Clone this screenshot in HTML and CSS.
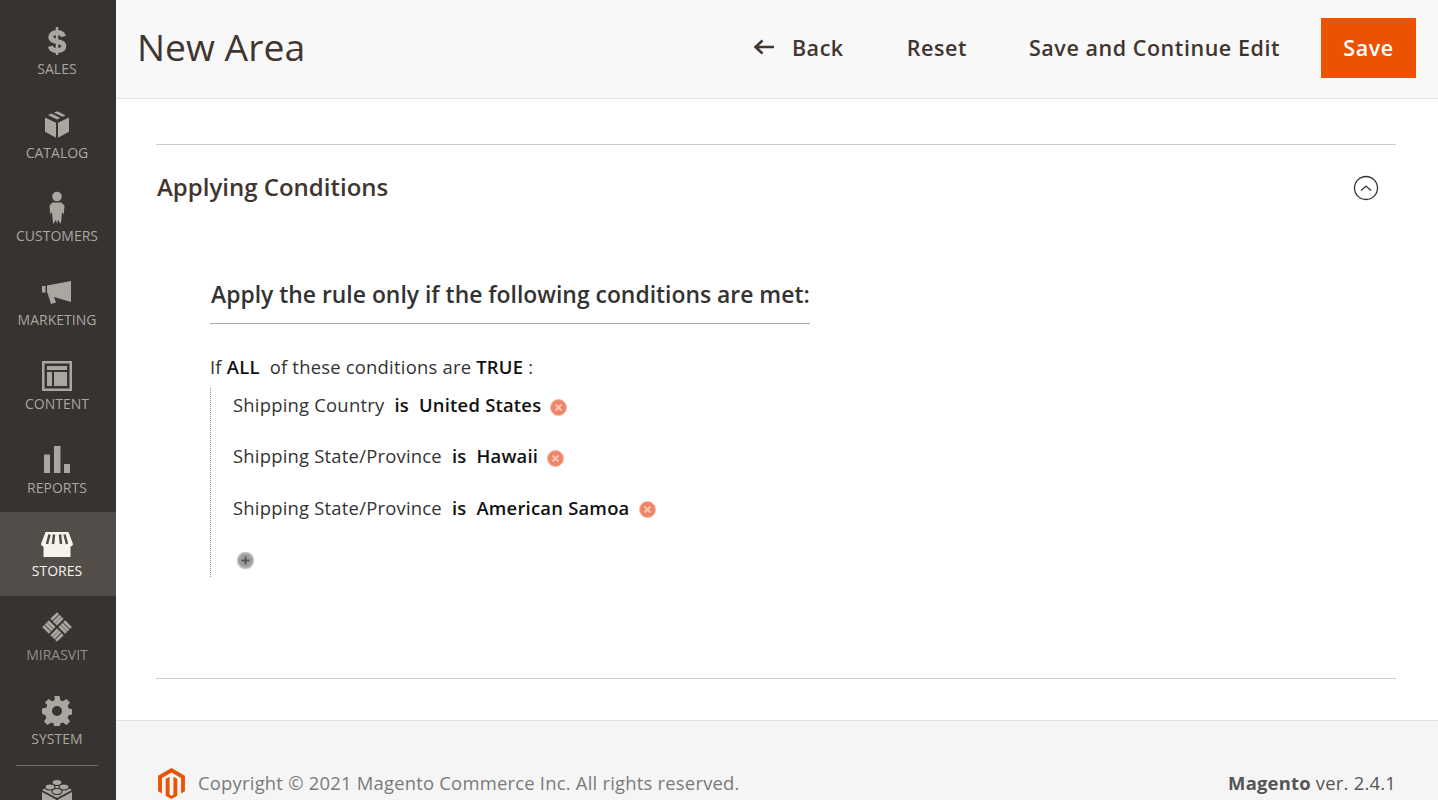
FILE: index.html
```html
<!DOCTYPE html>
<html lang="en">
<head>
<meta charset="utf-8">
<title>New Area</title>
<link rel="stylesheet" href="styles.css">
</head>
<body>
<div class="app">
  <nav class="sidebar">
    <a class="nav-item"><span class="nav-icon"><svg width="30" height="30" viewBox="0 0 30 30"><path class="dollar-s" d="M21.500 10.500c-.8-2.800-3.200-4-6.500-4-3.600 0-6.200 1.700-6.200 4.600 0 6 13 3 13 9 0 3-2.900 4.400-6.800 4.400-3.400 0-5.800-1.300-6.700-4.300"/><path class="dollar-b" d="M15 1v28"/></svg></span><span class="nav-label">SALES</span></a>
    <a class="nav-item"><span class="nav-icon"><svg width="30" height="30" viewBox="0 0 30 30"><path class="fi" d="M18 2.500l-3-1.200-3 1.200 8.500 4.200 3-1.200zM9.500 3.500L6 5l9 4.600 3.200-1.500zM3 7.500v14.300l11 6V12.800zM27 7.500L16 12.800v15l11-6z"/></svg></span><span class="nav-label">CATALOG</span></a>
    <a class="nav-item"><span class="nav-icon"><svg width="30" height="34" viewBox="0 0 30 34"><circle class="fi" cx="15" cy="5.500" r="4.800"/><path class="fi" d="M10.500 11.500h9l3 3-.8 9-1.700-2.500-1 12-3-4-1 4-1-4-3 4-1-12-1.700 2.500-.8-9z"/></svg></span><span class="nav-label">CUSTOMERS</span></a>
    <a class="nav-item"><span class="nav-icon"><svg width="30" height="30" viewBox="0 0 30 30"><path class="fi" d="M0 9h3.500v6.500H0zM5 8.500l24-4.500v21L12 20l2 5.500-5 1.500-2.800-9L5 15z"/></svg></span><span class="nav-label">MARKETING</span></a>
    <a class="nav-item"><span class="nav-icon"><svg width="30" height="30" viewBox="0 0 30 30"><path class="fi" fill-rule="evenodd" d="M0 0h30v30H0zM2.500 2.500v25h25v-25zM5 5h20v4H5zM5 11h5v14H5zM12 11h13v14H12z"/></svg></span><span class="nav-label">CONTENT</span></a>
    <a class="nav-item"><span class="nav-icon"><svg width="30" height="30" viewBox="0 0 30 30"><path class="fi" d="M2 9.500h6V28H2zM12 1h6.500v27H12zM22 19h6v9h-6z"/></svg></span><span class="nav-label">REPORTS</span></a>
    <a class="nav-item is-active"><span class="nav-icon"><svg class="store" width="34" height="30" viewBox="0 0 34 30"><path class="fi" d="M5.500 1H28.500L33 13c0 1.500-1.500 2.500-2.500 2.500V26H3.500V15.500C2.500 15.500 1 14.500 1 13z"/><path class="cut" d="M9.500 3.500L7 13M14 3.500L13 13M20 3.500L21 13M24.500 3.500L27 13"/></svg></span><span class="nav-label">STORES</span></a>
    <a class="nav-item is-dim"><span class="nav-icon"><svg width="30" height="30" viewBox="0 0 30 30"><g class="fi" transform="rotate(45 15 15)"><rect x="4.500" y="4.500" width="2.800" height="9.500"/><rect x="8.100" y="4.500" width="2.800" height="9.500"/><rect x="11.200" y="4.500" width="2.800" height="9.500"/><rect x="16" y="4.500" width="9.500" height="2.800"/><rect x="16" y="8.100" width="9.500" height="2.800"/><rect x="16" y="11.200" width="9.500" height="2.800"/><rect x="16" y="16" width="2.800" height="9.500"/><rect x="19.100" y="16" width="2.800" height="9.500"/><rect x="22.700" y="16" width="2.800" height="9.500"/><rect x="4.500" y="16" width="9.500" height="2.800"/><rect x="4.500" y="19.100" width="9.500" height="2.800"/><rect x="4.500" y="22.700" width="9.500" height="2.800"/></g></svg></span><span class="nav-label">MIRASVIT</span></a>
    <a class="nav-item"><span class="nav-icon"><svg width="30" height="30" viewBox="0 0 30 30"><path class="fi" fill-rule="evenodd" d="M12.500 0h5l.8 4.200 2.600 1.100 3.600-2.400 3.500 3.500-2.400 3.600 1.100 2.600 4.200.8v5l-4.200.8-1.100 2.600 2.400 3.600-3.500 3.500-3.600-2.400-2.600 1.100-.8 4.200h-5l-.8-4.200-2.600-1.100-3.600 2.400-3.500-3.500 2.400-3.600-1.100-2.600L0 17.500v-5l4.200-.8 1.100-2.600L2.900 6.500l3.500-3.500L10 5.300l2.600-1.100zM15 10a5 5 0 1 0 0 10 5 5 0 0 0 0-10z"/></svg></span><span class="nav-label">SYSTEM</span></a>
    <div class="nav-sep"></div>
    <a class="nav-item is-lego"><span class="nav-icon"><svg width="30" height="30" viewBox="0 0 30 30"><path class="fi" d="M0 12L15 4l15 8-15 8zM0 14l14 7.500V30H0zM30 14l-14 7.500V30h14z"/><ellipse class="stud" cx="15" cy="4.500" rx="5" ry="3"/><ellipse class="stud" cx="8" cy="9" rx="5" ry="3"/><ellipse class="stud" cx="22" cy="9" rx="5" ry="3"/><ellipse class="stud" cx="15" cy="13.500" rx="5" ry="3"/></svg></span></a>
  </nav>
  <div class="main">
    <header class="page-header">
      <h1 class="page-title">New Area</h1>
      <div class="actions">
        <a class="action back"><svg width="22" height="16" viewBox="0 0 22 16"><path class="arrow" d="M21 8H3M9.500 1.500L2.500 8l7 6.500"/></svg><span>Back</span></a>
        <a class="action action-reset">Reset</a>
        <a class="action action-continue">Save and Continue Edit</a>
        <a class="save">Save</a>
      </div>
    </header>
    <div class="content">
      <section class="panel">
        <div class="panel-head">
          <h2 class="panel-title">Applying Conditions</h2>
          <svg class="toggle" width="26" height="26" viewBox="0 0 26 26"><circle class="ring" cx="13" cy="13" r="11.500"/><path class="ring" d="M8 15.500l5-4.500 5 4.500"/></svg>
        </div>
        <div class="rule">
          <h3 class="rule-title">Apply the rule only if the following conditions are met:</h3>
          <p class="rule-if">If <b>ALL</b>&nbsp; of these conditions are <b>TRUE</b> :</p>
          <ul class="conds">
            <li class="cond">Shipping Country&nbsp; <b>is</b>&nbsp; <b>United States</b> <svg class="rm" width="17" height="17" viewBox="0 0 17 17"><circle class="rm-bg" cx="8.500" cy="8.500" r="8"/><path class="rm-x" d="M5.500 5.500l6 6M11.500 5.500l-6 6"/></svg></li>
            <li class="cond">Shipping State/Province&nbsp; <b>is</b>&nbsp; <b>Hawaii</b> <svg class="rm" width="17" height="17" viewBox="0 0 17 17"><circle class="rm-bg" cx="8.500" cy="8.500" r="8"/><path class="rm-x" d="M5.500 5.500l6 6M11.500 5.500l-6 6"/></svg></li>
            <li class="cond">Shipping State/Province&nbsp; <b>is</b>&nbsp; <b>American Samoa</b> <svg class="rm" width="17" height="17" viewBox="0 0 17 17"><circle class="rm-bg" cx="8.500" cy="8.500" r="8"/><path class="rm-x" d="M5.500 5.500l6 6M11.500 5.500l-6 6"/></svg></li>
            <li class="cond add"><svg width="17" height="17" viewBox="0 0 17 17"><circle class="add-bg" cx="8.500" cy="8.500" r="8"/><path class="add-x" d="M8.500 4.500v8M4.500 8.500h8"/></svg></li>
          </ul>
        </div>
      </section>
    </div>
    <footer class="footer">
      <svg class="logo" width="27" height="31" viewBox="1.600 0 20.800 24"><path class="logo-p" d="M12 0L22.400 6V18L19.400 19.700V7.700L12 3.400 4.600 7.700V19.700L1.600 18V6zM7.500 8.500L10.500 6.800V20.500L12 21.400 13.500 20.500V6.800L16.500 8.500V21.400L12 24 7.500 21.400z"/></svg>
      <span class="copy">Copyright © 2021 Magento Commerce Inc. All rights reserved.</span>
      <span class="ver"><b>Magento</b> ver. 2.4.1</span>
    </footer>
  </div>
</div>
</body>
</html>
```

FILE: styles.css
```css
* { box-sizing: border-box; }
html, body { margin: 0; height: 100%; overflow: hidden; }
body { font-family: "Open Sans", sans-serif; color: #333; background: #fff; }
.app { display: flex; height: 800px; overflow: hidden; }

.sidebar { width: 116px; flex: none; background: #373330; padding-top: 9.800px; display: flex; flex-direction: column; overflow: hidden; }
.nav-item { height: 83.750px; flex: none; display: flex; flex-direction: column; align-items: center; padding-right: 2px; color: #aaa6a0; }
.nav-icon { height: 34px; margin-top: 14px; display: flex; align-items: center; justify-content: center; }
.nav-label { font-size: 14px; line-height: 20px; margin-top: 1px; }
.dollar-s { fill: none; stroke: #aaa6a0; stroke-width: 5; }
.dollar-b { fill: none; stroke: #aaa6a0; stroke-width: 2.500; }
.fi { fill: #aaa6a0; }
.stud { fill: #aaa6a0; stroke: #373330; stroke-width: 1.200; }
.is-active { background: #524d49; color: #f7f3eb; }
.is-active .fi { fill: #f7f3eb; }
.store { margin-top: 6px; }
.cut { fill: none; stroke: #524d49; stroke-width: 2.500; }
.is-dim { color: #938f8a; }
.is-lego .nav-icon { margin-top: 10px; }
.nav-sep { height: 1px; flex: none; background: #736e69; margin: 1.200px 18px 0 16px; }

.main { flex: 1; min-width: 0; display: flex; flex-direction: column; }
.page-header { height: 99px; flex: none; background: #f8f8f8; border-bottom: 1px solid #e3e3e3; display: flex; align-items: center; justify-content: space-between; padding: 0 22px 2px 21px; }
.page-title { margin: 0 0 4px; font-size: 37.300px; font-weight: 400; color: #41362f; }
.actions { display: flex; align-items: center; }
.action { font-size: 21.500px; letter-spacing: .55px; font-weight: 600; color: #41362f; margin: 0 63px 2px 0; display: flex; align-items: center; gap: 17px; }
.action-reset { margin-right: 62px; }
.action-continue { margin-right: 41px; }
.arrow { fill: none; stroke: #41362f; stroke-width: 2.500; }
.save { width: 95px; height: 60px; background: #eb5202; color: #fff; font-size: 21.500px; letter-spacing: .55px; font-weight: 600; display: flex; align-items: center; justify-content: center; padding-bottom: 2px; }

.content { height: 622px; flex: none; background: #fff; padding: 45px 42px 0 40px; border-bottom: 1px solid #e3e3e3; }
.panel { border-top: 1px solid #cccccc; border-bottom: 1px solid #cccccc; height: 535px; }
.panel-head { height: 84px; display: flex; align-items: center; justify-content: space-between; padding: 0 17px 0 1px; }
.panel-title { margin: 0 0 2px; font-size: 24px; font-weight: 600; color: #41362f; }
.toggle { margin-top: 2px; }
.ring { fill: none; stroke: #333; stroke-width: 1.300; }
.rule { padding: 50px 0 0 54px; }
.rule-title { margin: 0; display: inline-block; font-size: 22.900px; font-weight: 600; color: #333; line-height: 31px; padding: 0 0 13px 1px; border-bottom: 1px solid #aaa; }
.rule-if { margin: 29px 0 0; font-size: 18.400px; letter-spacing: .23px; line-height: 28px; }
.rule-if b, .cond b { font-weight: 600; color: #111; }
.conds { list-style: none; margin: 7px 0 0; padding: 0 0 0 22px; border-left: 1px dotted #888; height: 189px; }
.cond { font-size: 18.400px; letter-spacing: .23px; line-height: 28px; height: 51.300px; padding-top: 3px; display: block; }
.rm { vertical-align: -3.500px; margin-left: 4px; }
.rm-bg { fill: #f08468; stroke: #f4b8a4; }
.rm-x { stroke: #f8c8b4; stroke-width: 1.800; }
.add { padding: 6.500px 0 0 4px; }
.add-bg { fill: #a0a0a0; stroke: #c8c8c8; stroke-width: 1.500; }
.add-x { stroke: #555; stroke-width: 2; }

.footer { flex: 1; background: #f5f5f5; display: flex; align-items: flex-start; padding: 47px 42px 0 42px; }
.logo { margin-right: 13px; }
.logo-p { fill: #eb5202; }
.copy { font-size: 18.400px; letter-spacing: .23px; color: #7a7a7a; line-height: 30px; }
.ver { margin-left: auto; font-size: 18.400px; letter-spacing: .23px; color: #555; line-height: 30px; }
.ver b { font-weight: 700; }
```
